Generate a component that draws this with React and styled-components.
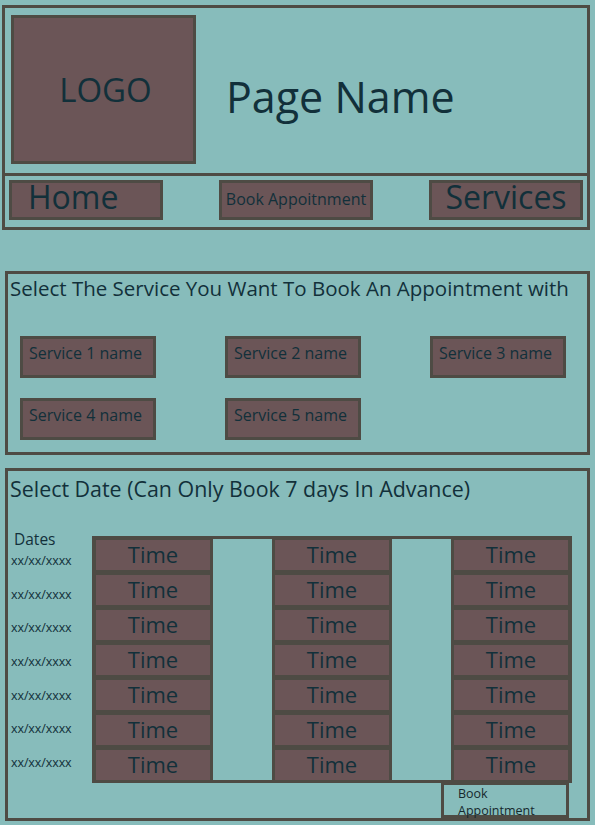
import React from 'react'
import styled, { createGlobalStyle } from 'styled-components'

const teal = '#87bcbb'
const line = '#4e4b44'
const fill = '#6b5557'
const ink = '#12303a'

const GlobalStyle = createGlobalStyle`
  html, body {
    margin: 0;
    padding: 0;
    background: ${teal};
  }
  body {
    font-family: "Open Sans", "Noto Sans", sans-serif;
    color: ${ink};
  }
  * { box-sizing: border-box; }
`

const Page = styled.div`
  width: 595px;
  height: 825px;
  padding-top: 5px;
  overflow: hidden;
`

const Header = styled.header`
  margin: 0 5px 0 2px;
  border: 3px solid ${line};
`

const Banner = styled.div`
  height: 168px;
  display: flex;
  align-items: flex-start;
  border-bottom: 3px solid ${line};
`

const Logo = styled.div`
  width: 185px;
  height: 149px;
  margin: 7px 0 0 6px;
  border: 3px solid ${line};
  background: ${fill};
  display: flex;
  align-items: center;
  justify-content: center;
  padding-left: 4px;
  font-size: 33px;
`

const PageName = styled.h1`
  margin: 63px 0 0 30px;
  font-size: 43px;
  font-weight: 400;
  line-height: 52px;
`

const Nav = styled.nav`
  height: 51px;
  padding: 4px 4px 0;
  display: flex;
  justify-content: space-between;
  align-items: flex-start;
`

const NavButton = styled.div`
  width: 154px;
  height: 40px;
  border: 3px solid ${line};
  background: ${fill};
  display: flex;
  align-items: center;
  justify-content: ${({ $left }) => ($left ? 'flex-start' : 'center')};
  padding: 0 0 ${({ $size }) => ($size > 20 ? 6 : 2)}px ${({ $left }) => ($left ? 16 : 0)}px;
  font-size: ${({ $size }) => $size}px;
  line-height: 1;
  white-space: nowrap;
`

const Section = styled.section`
  margin: ${({ $top }) => $top}px 5px 0;
  border: 3px solid ${line};
`

const TitleBar = styled.div`
  padding-top: ${({ $top }) => $top}px;
`

const Title = styled.h2`
  margin: 0;
  padding-left: 2px;
  font-size: ${({ $size }) => $size}px;
  font-weight: 400;
  line-height: 24px;
  white-space: nowrap;
`

const ServiceGrid = styled.div`
  display: grid;
  grid-template-columns: repeat(3, 136px);
  column-gap: 69px;
  row-gap: 20px;
  padding: 36px 0 12px 12px;
`

const ServiceButton = styled.div`
  height: 42px;
  border: 3px solid ${line};
  background: ${fill};
  display: flex;
  align-items: center;
  padding: 0 0 8px 6px;
  font-size: 16px;
  line-height: 1;
  white-space: nowrap;
`

const DateBody = styled.div`
  display: flex;
  align-items: flex-start;
  margin-top: 30px;
`

const DateColumn = styled.div`
  width: 84px;
  display: flex;
  flex-direction: column;
`

const DatesHeading = styled.div`
  padding-left: 6px;
  font-size: 15.5px;
  line-height: 16px;
`

const DateList = styled.div`
  margin-top: 6px;
  display: flex;
  flex-direction: column;
  gap: 17.7px;
`

const DateLabel = styled.div`
  padding-left: 3px;
  font-size: 12.5px;
  line-height: 16px;
  letter-spacing: -0.1px;
`

const ScheduleWrap = styled.div`
  margin-top: 5px;
  width: 480px;
  display: flex;
  flex-direction: column;
`

const Schedule = styled.div`
  display: grid;
  grid-template-columns: 118px 120px 118px;
  column-gap: 59px;
  border: 3px solid ${line};
`

const TimeColumn = styled.div`
  background: ${line};
  display: flex;
  flex-direction: column;
  gap: 5.5px;
  padding: ${({ $pad }) => $pad};
`

const TimeCell = styled.div`
  height: 29.5px;
  background: ${fill};
  text-align: center;
  font-size: 22px;
  line-height: 29.5px;
`

const BookButton = styled.div`
  align-self: flex-end;
  width: 128px;
  height: 36px;
  margin: -1px 3px 0 0;
  border: 3px solid ${line};
  padding: 0 0 0 14px;
  font-size: 12.5px;
  line-height: 17px;
  color: #16282d;
`

const services = ['Service 1 name', 'Service 2 name', 'Service 3 name', 'Service 4 name', 'Service 5 name']
const days = Array.from({ length: 7 }, () => 'xx/xx/xxxx')
const columnPads = ['1px 3px 0 1px', '1px 3px 0 3px', '1px 1px 0 3px']

export default function App() {
  return (
    <Page>
      <GlobalStyle />
      <Header>
        <Banner>
          <Logo>LOGO</Logo>
          <PageName>Page Name</PageName>
        </Banner>
        <Nav>
          <NavButton $size={32} $left>Home</NavButton>
          <NavButton $size={16}>Book Appoitnment</NavButton>
          <NavButton $size={32}>Services</NavButton>
        </Nav>
      </Header>

      <Section $top={41}>
        <TitleBar $top={2}>
          <Title $size={20.5}>Select The Service You Want To Book An Appointment with</Title>
        </TitleBar>
        <ServiceGrid>
          {services.map((s) => (
            <ServiceButton key={s}>{s}</ServiceButton>
          ))}
        </ServiceGrid>
      </Section>

      <Section $top={13}>
        <TitleBar $top={6}>
          <Title $size={21.4}>Select Date (Can Only Book 7 days In Advance)</Title>
        </TitleBar>
        <DateBody>
          <DateColumn>
            <DatesHeading>Dates</DatesHeading>
            <DateList>
              {days.map((d, i) => (
                <DateLabel key={i}>{d}</DateLabel>
              ))}
            </DateList>
          </DateColumn>
          <ScheduleWrap>
            <Schedule>
              {columnPads.map((pad, c) => (
                <TimeColumn key={c} $pad={pad}>
                  {days.map((_, r) => (
                    <TimeCell key={r}>Time</TimeCell>
                  ))}
                </TimeColumn>
              ))}
            </Schedule>
            <BookButton>
              Book
              <br />
              Appointment
            </BookButton>
          </ScheduleWrap>
        </DateBody>
      </Section>
    </Page>
  )
}
